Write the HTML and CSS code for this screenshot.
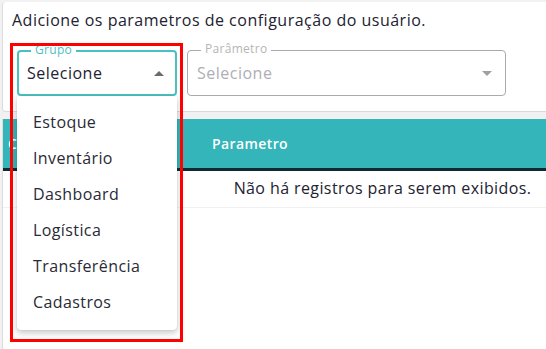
FILE: index.html
```html
<!DOCTYPE html>
<html lang="pt-BR">
<head>
    <meta charset="UTF-8">
    <meta name="viewport" content="width=device-width, initial-scale=1.0">
    <title>Parâmetros do usuário</title>
    <link rel="stylesheet" href="styles.css">
</head>
<body>
    <div class="page">
        <div class="card filters">
            <p class="intro">Adicione os parametros de configuração do usuário.</p>
            <div class="fields">
                <div class="select open">
                    <span class="select-label">Grupo</span>
                    <span class="select-value">Selecione</span>
                    <span class="arrow up"></span>
                    <ul class="menu">
                        <li>Estoque</li>
                        <li>Inventário</li>
                        <li>Dashboard</li>
                        <li>Logística</li>
                        <li>Transferência</li>
                        <li>Cadastros</li>
                    </ul>
                </div>
                <div class="select disabled wide">
                    <span class="select-label">Parâmetro</span>
                    <span class="select-value">Selecione</span>
                    <span class="arrow"></span>
                </div>
            </div>
            <div class="highlight"></div>
        </div>

        <div class="card table-card">
            <table class="grid">
                <thead>
                    <tr>
                        <th class="col-group">C</th>
                        <th>Parametro</th>
                    </tr>
                </thead>
                <tbody>
                    <tr>
                        <td colspan="2" class="empty">Não há registros para serem exibidos.</td>
                    </tr>
                </tbody>
            </table>
        </div>
    </div>
</body>
</html>
```

FILE: styles.css
```css
html, body {
    margin: 0;
    padding: 0;
    overflow: hidden;
}

body {
    background: #f1f1f1;
    font-family: 'Open Sans', sans-serif;
    color: #222230;
    letter-spacing: 0.5px;
}

.page {
    width: 760px;
    padding: 2px 0 0 2px;
}

.card {
    background: white;
    border-left: 1px solid #dcdcdc;
    border-radius: 4px;
}

.filters {
    position: relative;
    height: 110px;
    border-bottom: 1px solid #d9d9d9;
    padding: 0 0 0 9px;
    box-sizing: border-box;
}

.intro {
    margin: 0;
    padding-top: 8px;
    font-size: 16px;
    line-height: 20px;
}

.fields {
    display: flex;
    gap: 10px;
    margin-top: 20px;
    padding-left: 5px;
}

.select {
    position: relative;
    width: 160px;
    height: 46px;
    box-sizing: border-box;
    border: 1px solid #aaaaaa;
    border-radius: 4px;
    display: flex;
    align-items: center;
    padding: 0 9px;
}

.select.open {
    border: 2px solid #4cc0c0;
    padding: 0 8px;
}

.select.wide {
    width: 319px;
}

.select-label {
    position: absolute;
    top: -9px;
    left: 12px;
    padding: 0 4px;
    background: white;
    font-size: 12px;
    line-height: 14px;
    letter-spacing: 0.3px;
    color: #4cc0c0;
}

.disabled .select-label {
    left: 13px;
    color: #b5b5b5;
}

.select-value {
    flex: 1;
    font-size: 16px;
}

.disabled .select-value {
    color: #aeaeb4;
}

.arrow {
    width: 0;
    height: 0;
    margin-right: 4px;
    border-left: 5px solid transparent;
    border-right: 5px solid transparent;
    border-top: 5px solid #a0a0a0;
}

.arrow.up {
    margin-right: 3px;
    border-top: none;
    border-bottom: 5px solid #6a6a70;
}

.menu {
    position: absolute;
    z-index: 2;
    top: 44px;
    left: -2px;
    width: 160px;
    margin: 0;
    padding: 8px 0 10px;
    list-style: none;
    background: white;
    border-radius: 0 0 4px 4px;
    box-shadow: 0 3px 6px rgba(0, 0, 0, 0.22), 0 0 1px rgba(0, 0, 0, 0.2);
}

.menu li {
    height: 36px;
    line-height: 36px;
    padding-left: 16px;
    font-size: 16px;
    letter-spacing: 0.4px;
    color: #2a2a36;
}

.highlight {
    position: absolute;
    z-index: 3;
    top: 41px;
    left: 7px;
    width: 173px;
    height: 299px;
    box-sizing: border-box;
    border: 3px solid #ff0000;
}

.table-card {
    margin-top: 7px;
    height: 240px;
    border-radius: 0;
}

.grid {
    width: 100%;
    border-collapse: collapse;
}

.grid th {
    height: 49px;
    background: #33b5b9;
    color: white;
    font-size: 14px;
    font-weight: 600;
    letter-spacing: 0.4px;
    text-align: left;
    padding: 0 0 0 5px;
    border-bottom: 3px solid #0e2a33;
}

.grid th.col-group {
    width: 199px;
}

.grid td.empty {
    height: 34px;
    padding: 0 0 2px;
    text-align: center;
    font-size: 16px;
    letter-spacing: 0.4px;
    border-bottom: 1px solid #f1f1f1;
}
```
